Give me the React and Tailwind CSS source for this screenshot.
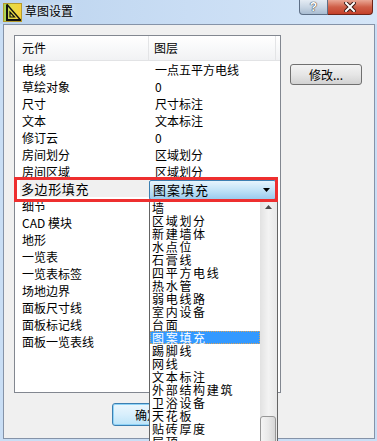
import React from "react";

/* LIST DATA */
const rows = [
  ["电线", "一点五平方电线"],
  ["草绘对象", "0"],
  ["尺寸", "尺寸标注"],
  ["文本", "文本标注"],
  ["修订云", "0"],
  ["房间划分", "区域划分"],
  ["房间区域", "区域划分"],
  ["多边形填充", "图案填充", true],
  ["细节", ""],
  ["CAD 模块", ""],
  ["地形", ""],
  ["一览表", ""],
  ["一览表标签", ""],
  ["场地边界", ""],
  ["面板尺寸线", ""],
  ["面板标记线", ""],
  ["面板一览表线", ""],
];

const layers = [
  "墙",
  "区域划分",
  "新建墙体",
  "水点位",
  "石膏线",
  "四平方电线",
  "热水管",
  "弱电线路",
  "室内设备",
  "台面",
  "图案填充",
  "踢脚线",
  "网线",
  "文本标注",
  "外部结构建筑",
  "卫浴设备",
  "天花板",
  "贴砖厚度",
  "层顶",
];

/* TITLE ICON */
function TitleIcon() {
  return (
    <svg width="19" height="19" viewBox="0 0 19 19">
      <defs>
        <linearGradient id="ic" x1="0" y1="0" x2="1" y2="0">
          <stop offset="0" stopColor="#9cd35a" />
          <stop offset="0.45" stopColor="#e6dc46" />
          <stop offset="1" stopColor="#f7cf3a" />
        </linearGradient>
      </defs>
      <rect x="0.5" y="0.5" width="18" height="18" fill="url(#ic)" stroke="#b59a2a" />
      <path d="M4 1.5 V17 H18" fill="none" stroke="#111" strokeWidth="2" />
      <path d="M4 1.5 L17.5 17" fill="none" stroke="#111" strokeWidth="1.4" />
      <path d="M7 9 V14 H11.5 Z" fill="none" stroke="#111" strokeWidth="1.2" />
    </svg>
  );
}

function Row({ name, value, editing }) {
  if (editing) {
    return (
      <div className="relative flex h-[17px] items-start">
        <div className="ml-[5px] flex h-[17px] w-[129px] items-center bg-[#f0f0f0] pl-[1px] text-[13px] leading-[17px] tracking-[0.6px]">
          {name}
        </div>
        {/* COMBOBOX */}
        <div className="flex h-[20px] w-[127px] items-center rounded-[2px] border border-[#3c7fb1] bg-gradient-to-b from-[#e6f4fc] via-[#c2e3f7] to-[#9acbed] pl-[3px] pr-[5px]">
          <span className="text-[13px] leading-[18px] tracking-[1px]">{value}</span>
          <svg className="ml-auto" width="7" height="4" viewBox="0 0 7 4">
            <path d="M0 0 H7 L3.5 4 Z" fill="#000" />
          </svg>
        </div>
        {/* RED ANNOTATION */}
        <div className="pointer-events-none absolute left-[-1px] top-[-3px] z-20 h-[25px] w-[264px] border-[3px] border-[#ee2f2f]" />
      </div>
    );
  }
  return (
    <div className="flex h-[17px] items-center text-[12px] leading-[17px]">
      <div className="w-[134px] pl-[7px]">{name}</div>
      <div className="pl-[6px]">{value}</div>
    </div>
  );
}

export default function App() {
  return (
    <div className="relative h-[441px] w-[377px] overflow-hidden bg-[#c9def5] font-['Noto_Sans_CJK_SC',sans-serif] text-black">

      {/* TITLE BAR */}
      <div className="flex h-[24px] items-start bg-gradient-to-r from-[#bcd4ee] via-[#c9ddf4] to-[#d5e6f8]">
        <div className="pl-[3px] pt-[3px]">
          <TitleIcon />
        </div>
        <span className="ml-[3px] mt-[4px] text-[12px] leading-[14px] [text-shadow:0_0_6px_#ffffff]">
          草图设置
        </span>
        <div className="ml-auto mr-[4px] flex">
          <div className="flex h-[15px] w-[29px] items-center justify-center rounded-bl-[4px] border border-t-0 border-[#5e6f86] bg-gradient-to-b from-[#e4ebf3] via-[#c9d6e4] to-[#a9bcd1]">
            <span className="font-['Liberation_Sans',sans-serif] text-[12px] font-bold leading-[13px] text-white [text-shadow:0_0_1px_#222,0_0_1px_#222]">?</span>
          </div>
          <div className="flex h-[15px] w-[45px] items-center justify-center rounded-br-[4px] border border-l-0 border-t-0 border-[#6e2418] bg-gradient-to-b from-[#e9a795] via-[#cf5f48] to-[#c4402a]">
            <svg width="12" height="10" viewBox="0 0 12 10">
              <path d="M2 1 L10 9 M10 1 L2 9" stroke="#3a1a14" strokeWidth="4" strokeLinecap="square" />
              <path d="M2 1 L10 9 M10 1 L2 9" stroke="#ffffff" strokeWidth="2" strokeLinecap="square" />
            </svg>
          </div>
        </div>
      </div>

      {/* CLIENT AREA */}
      <div className="ml-[3px] flex h-[415px] w-[372px] flex-col border border-[#8593a8] bg-[#f0f0f0]">

        <div className="flex pl-[10px] pt-[10px]">

          {/* LIST VIEW */}
          <div className="flex h-[358px] w-[267px] flex-col border border-[#828790] bg-white">
            <div className="flex h-[25px] items-center border-b border-[#e2e3e5] bg-gradient-to-b from-white to-[#f1f2f4] text-[12px]">
              <div className="flex h-full w-[134px] items-center border-r border-[#e3e4e6] pl-[7px]">元件</div>
              <div className="flex h-full w-[127px] items-center border-r border-[#e3e4e6] pl-[5px]">图层</div>
            </div>
            {rows.map(([name, value, editing]) => (
              <Row key={name} name={name} value={value} editing={editing} />
            ))}
          </div>

          <div className="ml-[9px] pt-[26px]">
            <button className="h-[21px] w-[72px] rounded-[3px] border border-[#707070] bg-gradient-to-b from-[#f3f3f3] via-[#e6e6e6] to-[#d2d2d2] text-[12px] leading-[19px]">
              修改...
            </button>
          </div>
        </div>

        <div className="flex pl-[108px] pt-[10px]">
          <button className="h-[23px] w-[70px] rounded-[3px] border border-[#3c7fb1] bg-gradient-to-b from-[#ecf7fd] via-[#d8effc] to-[#bde4f8] text-[12px] leading-[21px] shadow-[inset_0_0_0_1px_#8fd3f7]">
            确定
          </button>
        </div>
      </div>

      {/* DROPDOWN LIST */}
      <div className="absolute left-[149px] top-[200px] z-10 flex h-[250px] w-[129px] border-x border-[#646464] bg-white">
        <div className="w-[110px] pt-[1px]">
          {layers.map((l) => (
            <div
              key={l}
              className={
                l === "图案填充"
                  ? "h-[13px] border border-dotted border-[#d9a25a] bg-[#3399ff] pl-[1px] text-[12px] leading-[11px] tracking-[1.7px] text-white"
                  : "h-[13px] pl-[2px] text-[12px] leading-[13px] tracking-[1.7px]"
              }
            >
              {l}
            </div>
          ))}
        </div>
        {/* SCROLLBAR */}
        <div className="flex w-[17px] flex-col bg-gradient-to-r from-[#e2e2e2] via-[#f3f3f3] to-[#e8e8e8]">
          <div className="flex h-[17px] items-center justify-center">
            <svg width="7" height="4" viewBox="0 0 7 4">
              <path d="M0 4 H7 L3.5 0 Z" fill="#4a4a4a" />
            </svg>
          </div>
          <div className="mt-[201px] h-[40px] w-[16px] rounded-[3px] border border-[#979797] bg-gradient-to-r from-[#f4f4f4] via-[#e9e9e9] to-[#d6d6d6]" />
        </div>
      </div>
    </div>
  );
}
